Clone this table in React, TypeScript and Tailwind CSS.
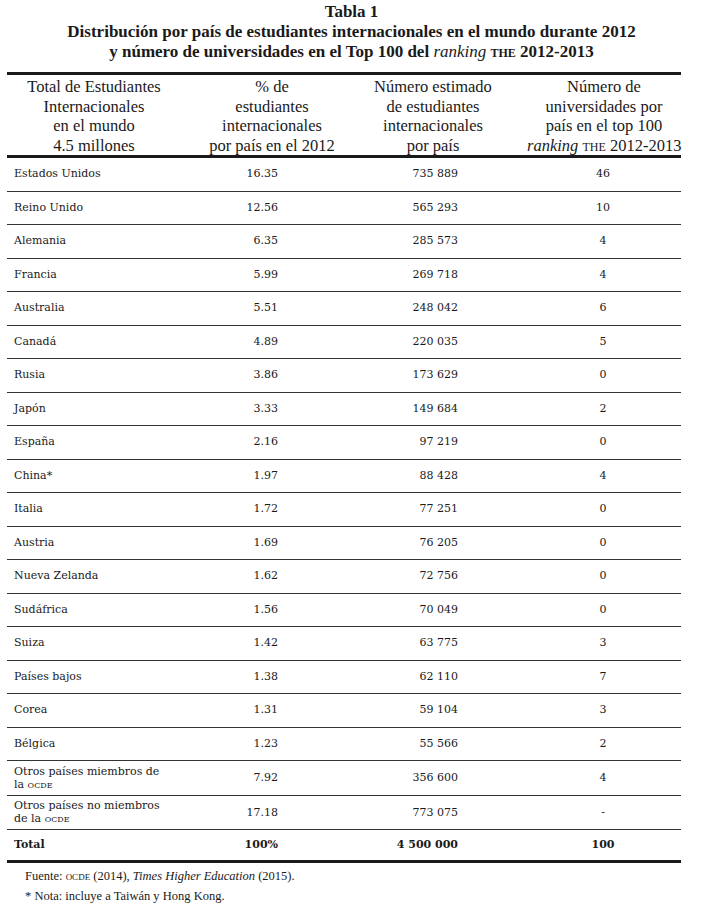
import React from 'react';

type Row = { pais: React.ReactNode; pct: string; num: string; top: string; tall?: boolean };

const Sc = ({ children }: { children: React.ReactNode }) => (
  <span className="[font-variant:small-caps]">{children}</span>
);

const rows: Row[] = [
  { pais: 'Estados Unidos', pct: '16.35', num: '735 889', top: '46' },
  { pais: 'Reino Unido', pct: '12.56', num: '565 293', top: '10' },
  { pais: 'Alemania', pct: '6.35', num: '285 573', top: '4' },
  { pais: 'Francia', pct: '5.99', num: '269 718', top: '4' },
  { pais: 'Australia', pct: '5.51', num: '248 042', top: '6' },
  { pais: 'Canadá', pct: '4.89', num: '220 035', top: '5' },
  { pais: 'Rusia', pct: '3.86', num: '173 629', top: '0' },
  { pais: 'Japón', pct: '3.33', num: '149 684', top: '2' },
  { pais: 'España', pct: '2.16', num: '97 219', top: '0' },
  { pais: 'China*', pct: '1.97', num: '88 428', top: '4' },
  { pais: 'Italia', pct: '1.72', num: '77 251', top: '0' },
  { pais: 'Austria', pct: '1.69', num: '76 205', top: '0' },
  { pais: 'Nueva Zelanda', pct: '1.62', num: '72 756', top: '0' },
  { pais: 'Sudáfrica', pct: '1.56', num: '70 049', top: '0' },
  { pais: 'Suiza', pct: '1.42', num: '63 775', top: '3' },
  { pais: 'Países bajos', pct: '1.38', num: '62 110', top: '7' },
  { pais: 'Corea', pct: '1.31', num: '59 104', top: '3' },
  { pais: 'Bélgica', pct: '1.23', num: '55 566', top: '2' },
  {
    pais: (
      <>
        Otros países miembros de
        <br />
        la <Sc>ocde</Sc>
      </>
    ),
    pct: '7.92',
    num: '356 600',
    top: '4',
    tall: true,
  },
  {
    pais: (
      <>
        Otros países no miembros
        <br />
        de la <Sc>ocde</Sc>
      </>
    ),
    pct: '17.18',
    num: '773 075',
    top: '-',
    tall: true,
  },
];

const cols = 'grid grid-cols-[174px_182px_150px_168px]';

export default function App() {
  return (
    <div className="w-[703px] h-[905px] bg-white text-[#1a1a1a] font-['Liberation_Serif',serif]">
      <div className="pt-[2px] text-center font-bold text-[17px] leading-[20px]">
        <p>Tabla 1</p>
        <p>Distribución por país de estudiantes internacionales en el mundo durante 2012</p>
        <p>
          y número de universidades en el Top 100 del <i className="font-normal">ranking</i>{' '}
          <Sc>the</Sc> 2012-2013
        </p>
      </div>

      <div className="ml-[7px] w-[674px] mt-[10px]">
        <div className={`${cols} border-y-[3px] border-[#1a1a1a] text-center text-[16.5px] leading-[19.5px] pt-[2px] whitespace-nowrap`}>
          <div>
            Total de Estudiantes
            <br />
            Internacionales
            <br />
            en el mundo
            <br />
            4.5 millones
          </div>
          <div>
            % de
            <br />
            estudiantes
            <br />
            internacionales
            <br />
            por país en el 2012
          </div>
          <div className="pr-[10px]">
            Número estimado
            <br />
            de estudiantes
            <br />
            internacionales
            <br />
            por país
          </div>
          <div className="pl-[14px]">
            Número de
            <br />
            universidades por
            <br />
            país en el top 100
            <br />
            <i>ranking</i> <Sc>the</Sc> 2012-2013
          </div>
        </div>

        <div className="font-['DejaVu_Serif',serif] text-[11px]">
          {rows.map((r, i) => (
            <div
              key={i}
              className={`${cols} items-center border-b-[1.5px] border-[#333] ${r.tall ? 'h-[34.5px] leading-[13px]' : 'h-[33.5px]'}`}
            >
              <div className="pl-[7px]">{r.pais}</div>
              <div className="text-right pr-[85px]">{r.pct}</div>
              <div className="text-right pr-[55px]">{r.num}</div>
              <div className="text-center pl-[12px]">{r.top}</div>
            </div>
          ))}
          <div className={`${cols} items-center h-[33px] border-b-[3px] border-[#1a1a1a] font-bold`}>
            <div className="pl-[7px]">Total</div>
            <div className="text-right pr-[85px]">100%</div>
            <div className="text-right pr-[55px]">4 500 000</div>
            <div className="text-center pl-[12px]">100</div>
          </div>
        </div>

        <div className="pl-[18px] pt-[3px] text-[12.5px] leading-[20px]">
          <p>
            Fuente: <Sc>ocde</Sc> (2014), <i>Times Higher Education</i> (2015).
          </p>
          <p>* Nota: incluye a Taiwán y Hong Kong.</p>
        </div>
      </div>
    </div>
  );
}
